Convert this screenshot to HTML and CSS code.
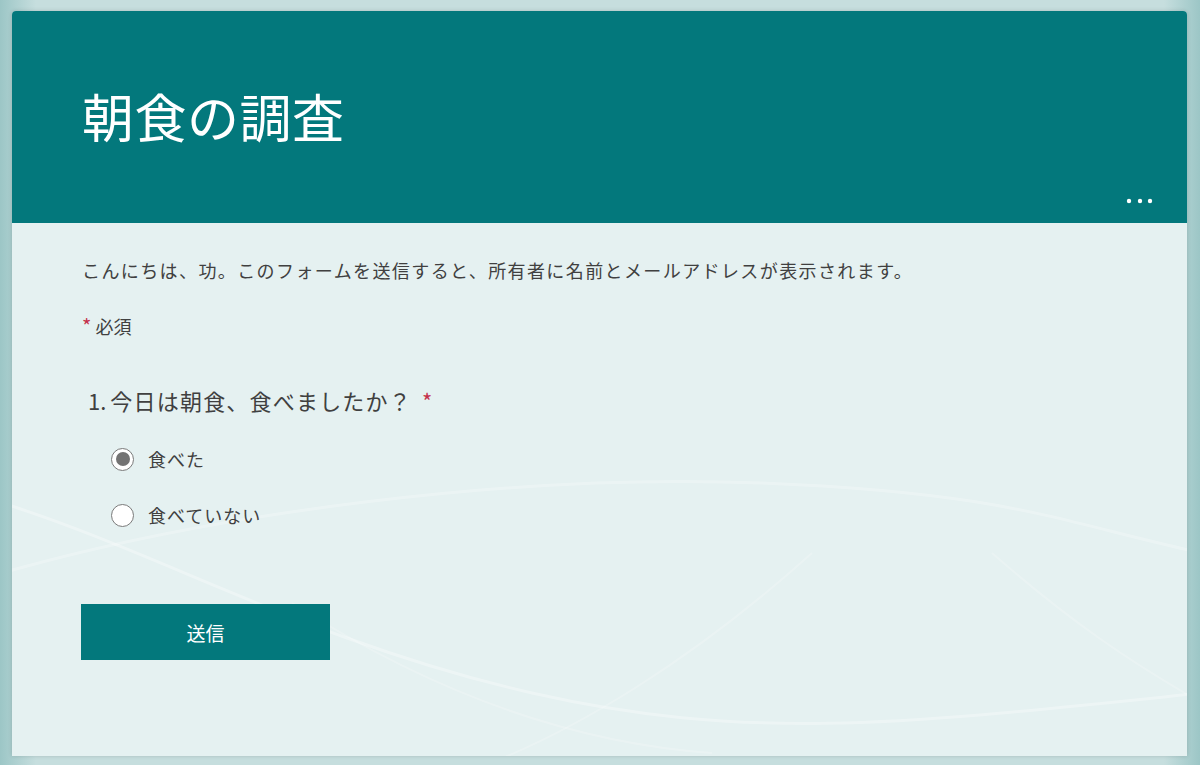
FILE: index.html
```html
<!DOCTYPE html>
<html lang="ja">
  <head>
    <meta charset="UTF-8" />
    <meta name="viewport" content="width=device-width, initial-scale=1.0" />
    <title>朝食の調査</title>
    <link rel="stylesheet" href="styles.css">
  </head>
  <body>
    <div class="page">
      <div class="card">
        <div class="header">
          <h1 class="title">朝食の調査</h1>
          <svg class="more" width="30" height="6" viewBox="0 0 30 6">
            <circle cx="3" cy="3" r="2.2" fill="#fff" />
            <circle cx="14" cy="3" r="2.2" fill="#fff" />
            <circle cx="24" cy="3" r="2.2" fill="#fff" />
          </svg>
        </div>
        <div class="body">
          <svg class="waves" width="1175" height="533" viewBox="0 0 1175 533" preserveAspectRatio="none">
            <path d="M-10 280 C 150 330, 300 420, 520 470 S 900 500, 1190 470" stroke="#fff" stroke-opacity="0.3" stroke-width="3" fill="none" />
            <path d="M-10 350 C 200 290, 500 250, 750 260 S 1050 300, 1190 330" stroke="#fff" stroke-opacity="0.25" stroke-width="3" fill="none" />
            <path d="M280 380 C 420 470, 560 520, 700 530" stroke="#fff" stroke-opacity="0.2" stroke-width="2" fill="none" />
            <path d="M800 330 C 700 420, 560 520, 420 560" stroke="#fff" stroke-opacity="0.2" stroke-width="2" fill="none" />
            <path d="M980 330 C 1060 400, 1120 440, 1190 480" stroke="#fff" stroke-opacity="0.2" stroke-width="2" fill="none" />
          </svg>
          <div class="content">
            <p class="desc">こんにちは、功。このフォームを送信すると、所有者に名前とメールアドレスが表示されます。</p>
            <p class="required"><span class="star">*</span> 必須</p>
            <div class="question">
              <div class="q-title"><span class="q-num">1.</span>今日は朝食、食べましたか？<span class="star">*</span></div>
              <div class="options">
                <label class="option">
                  <span class="radio checked"></span>
                  <span>食べた</span>
                </label>
                <label class="option">
                  <span class="radio"></span>
                  <span>食べていない</span>
                </label>
              </div>
            </div>
            <button class="submit">送信</button>
          </div>
        </div>
      </div>
    </div>
  </body>
</html>
```

FILE: styles.css
```css
html, body {
  margin: 0;
  height: 100%;
}
body {
  font-family: "Noto Sans CJK JP", "Noto Sans", sans-serif;
  background: linear-gradient(90deg, #9cc6c6 0%, #c6dede 3%, #c6dede 97%, #9cc6c6 100%);
  overflow: hidden;
}
.page {
  padding: 11px 13px 0 12px;
}
.card {
  height: 745px;
  background-color: #e5f1f1;
  border-radius: 4px 4px 0 0;
  box-shadow: 0 0 4px rgba(0, 0, 0, 0.15);
  overflow: hidden;
  display: flex;
  flex-direction: column;
}
.header {
  position: relative;
  height: 212px;
  background-color: #03787c;
  padding-left: 70px;
  display: flex;
  align-items: center;
  box-sizing: border-box;
}
.title {
  margin: 0 0 2px 0;
  color: #fff;
  font-weight: normal;
  font-size: 52px;
  line-height: 60px;
  letter-spacing: 0.5px;
}
.more {
  position: absolute;
  right: 31px;
  bottom: 19px;
}
.body {
  position: relative;
  flex-grow: 1;
}
.waves {
  position: absolute;
  left: 0;
  top: 0;
}
.content {
  position: relative;
  padding: 34px 70px 0 70px;
  color: #404040;
}
.desc {
  margin: 0;
  font-size: 18px;
  line-height: 26px;
  letter-spacing: 1.4px;
}
.required {
  margin: 30px 0 0 0;
  font-size: 18px;
  line-height: 26px;
}
.required .star {
  font-size: 20px;
}
.star {
  color: #c4314b;
}
.question {
  margin-top: 46px;
  padding-left: 6px;
}
.q-title {
  font-size: 22px;
  line-height: 30px;
  letter-spacing: 1.2px;
}
.q-num {
  margin-right: 4px;
  letter-spacing: 0;
}
.q-title .star {
  margin-left: 10px;
}
.options {
  margin-top: 29px;
  padding-left: 23px;
  display: flex;
  flex-direction: column;
  gap: 26px;
}
.option {
  display: flex;
  align-items: center;
  gap: 14px;
  height: 30px;
  font-size: 18px;
  letter-spacing: 1px;
}
.radio {
  width: 23px;
  height: 23px;
  box-sizing: border-box;
  border: 1.5px solid #7a7a7a;
  border-radius: 50%;
  background-color: #fff;
  display: flex;
  align-items: center;
  justify-content: center;
}
.radio.checked::after {
  content: "";
  width: 14px;
  height: 14px;
  border-radius: 50%;
  background-color: #737373;
}
.submit {
  margin-top: 74px;
  margin-left: -1px;
  width: 249px;
  height: 56px;
  border: none;
  background-color: #03787c;
  color: #fff;
  font-family: inherit;
  font-size: 19px;
}
```
